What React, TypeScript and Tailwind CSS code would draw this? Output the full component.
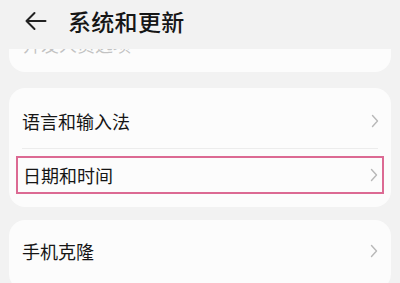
import React from "react";

const Chevron = () => (
  <svg width="8" height="14" viewBox="0 0 8 14" fill="none">
    <path d="M1.5 1.5 L6.5 7 L1.5 12.5" stroke="#b8b8b8" strokeWidth="1.4" strokeLinecap="round" strokeLinejoin="round" />
  </svg>
);

export default function App() {
  return (
    <div
      className="w-[400px] h-[283px] bg-[#f2f2f2] overflow-hidden text-[#161616]"
      style={{ fontFamily: '"Noto Sans CJK SC", "Noto Sans", sans-serif' }}
    >
      <div className="h-[40px] flex items-center pl-[24px] pt-[2px]">
        <svg width="23" height="20" viewBox="0 0 23 20" fill="none">
          <path d="M21.5 10 H2.5 M10.5 2 L2.5 10 L10.5 18" stroke="#222" strokeWidth="2" strokeLinecap="round" strokeLinejoin="round" />
        </svg>
        <span className="ml-[21px] text-[23px] leading-none font-medium tracking-[0.3px]">系统和更新</span>
      </div>
      <div className="mx-[9px] mt-[9px] h-[23px] bg-[#fcfcfc] rounded-b-[16px] overflow-hidden">
        <div className="-mt-[15px] pl-[14px] text-[18px] leading-[20px] opacity-25">开发人员选项</div>
      </div>
      <div className="mx-[9px] mt-[16px] bg-[#fcfcfc] rounded-[16px] pb-[13px]">
        <div className="h-[60px] flex items-center justify-between pl-[13px] pr-[12px] pt-[5px]">
          <span className="text-[18px] leading-none">语言和输入法</span>
          <Chevron />
        </div>
        <div className="mx-[13px] h-px bg-[#ececec]" />
        <div className="mt-[7px] mx-[7px] h-[38px] border-2 border-[#dc6a93] flex items-center justify-between pl-[5px] pr-[4px]">
          <span className="text-[18px] leading-none">日期和时间</span>
          <Chevron />
        </div>
      </div>
      <div className="mx-[9px] mt-[13px] bg-[#fcfcfc] rounded-[16px] h-[70px] flex items-center justify-between pl-[13px] pr-[13px] pb-[8px]">
        <span className="text-[18px] leading-none">手机克隆</span>
        <Chevron />
      </div>
    </div>
  );
}
